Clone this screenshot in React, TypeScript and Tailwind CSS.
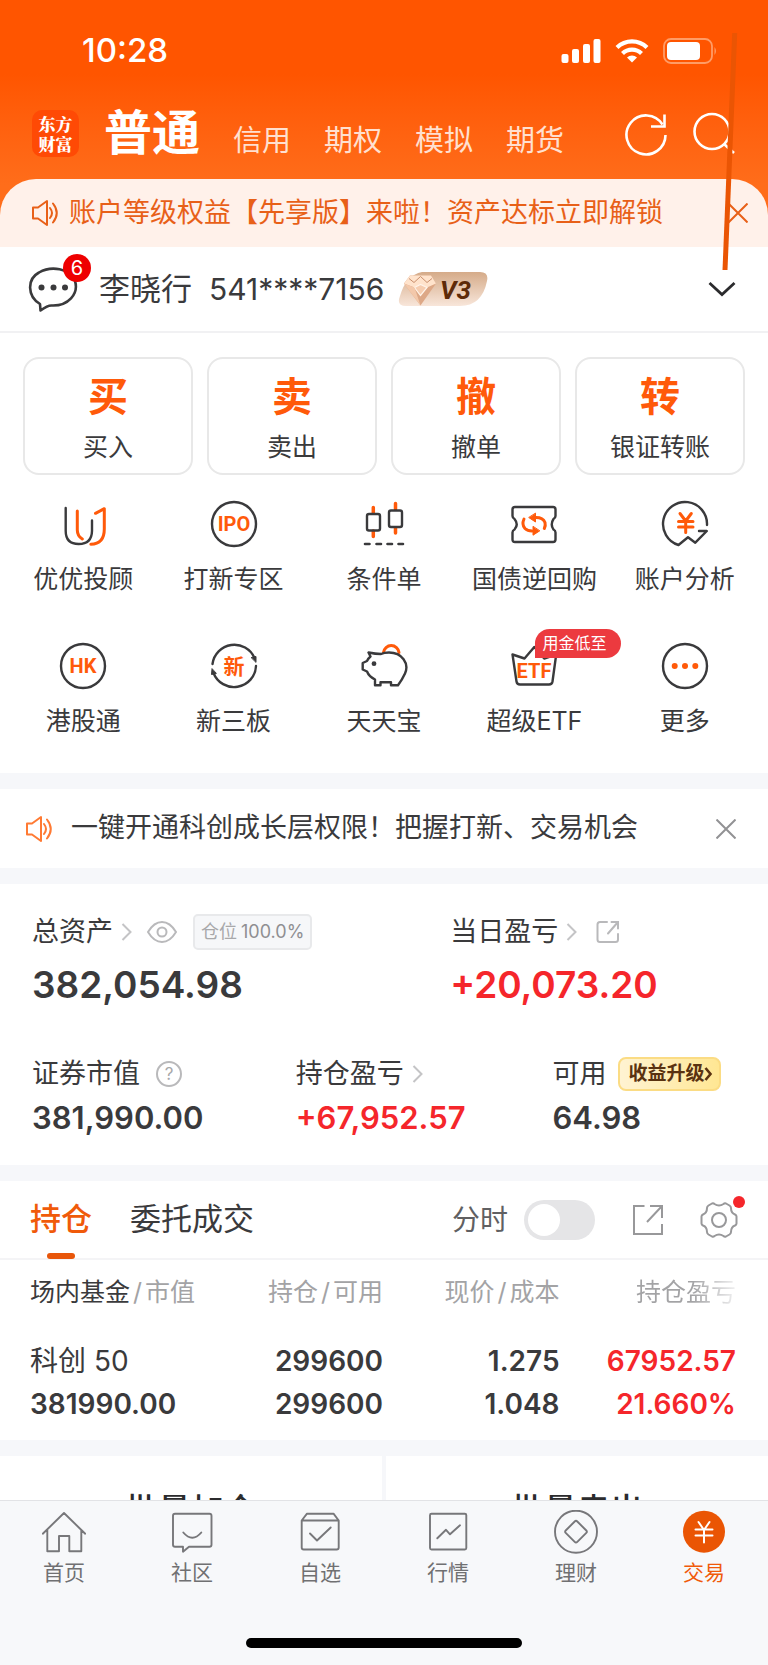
import type { ReactNode } from "react";

const dark = "#3a3a3c";
const orange = "#ff5a0a";

function Icon({ children }: { children: ReactNode }) {
  return (
    <svg
      viewBox="0 0 48 48"
      className="size-12"
      fill="none"
      stroke={dark}
      strokeWidth="2.4"
      strokeLinecap="round"
      strokeLinejoin="round"
      aria-hidden="true"
    >
      {children}
    </svg>
  );
}

function IconText({ children, size = 20 }: { children: string; size?: number }) {
  return (
    <text
      x="24"
      y={24 + size * 0.36}
      textAnchor="middle"
      fontSize={size}
      fill={orange}
      stroke="none"
      className="font-['Roboto','Noto_Sans_CJK_SC',sans-serif] font-bold"
    >
      {children}
    </text>
  );
}

function Horn({ className }: { className: string }) {
  return (
    <svg viewBox="0 0 28 28" className={`size-7 shrink-0 ${className}`} fill="none" stroke="currentColor" strokeWidth="2" aria-hidden="true">
      <path d="M2 8.500h5L16 2v24l-9-6.500H2z" strokeLinejoin="round" />
      <path d="M19 9q4 5 0 10M22 4.500q7.500 9.500 0 19" strokeLinecap="round" />
    </svg>
  );
}

function Close({ className }: { className: string }) {
  return (
    <svg viewBox="0 0 20 20" className={`size-5 ${className}`} stroke="currentColor" strokeWidth="2" aria-hidden="true">
      <path d="M0.500 0.500l19 19M19.500 0.500l-19 19" />
    </svg>
  );
}

function Chevron() {
  return (
    <svg viewBox="0 0 12 20" className="h-5 w-3 shrink-0 text-[#c4c4c6]" fill="none" stroke="currentColor" strokeWidth="2" aria-hidden="true">
      <path d="M1.500 2l8 8-8 8" />
    </svg>
  );
}

function StatusBar() {
  return (
    <div className="flex h-[102px] items-center justify-between pr-[50px] pl-[82px] text-white">
      <span className="text-[33px] font-medium">10:28</span>
      <div className="flex items-center gap-[14px]">
        <svg viewBox="0 0 40 26" className="h-[26px] w-10" fill="currentColor" aria-hidden="true">
          <rect x="0.500" y="16" width="7" height="9" rx="2" />
          <rect x="11" y="11" width="7" height="14" rx="2" />
          <rect x="22" y="6" width="7" height="19" rx="2" />
          <rect x="32.500" y="1" width="7" height="24" rx="2" />
        </svg>
        <svg viewBox="0 0 34 26" className="h-[26px] w-[34px]" fill="none" stroke="currentColor" strokeWidth="4.200" aria-hidden="true">
          <path d="M2 9.500a21.500 21.500 0 0 1 30 0" />
          <path d="M7.500 15.500a13.500 13.500 0 0 1 19 0" />
          <path d="M17 24.500l-5-5a7.200 7.200 0 0 1 10 0z" fill="currentColor" stroke="none" />
        </svg>
        <svg viewBox="0 0 55 26" className="h-[26px] w-[55px]" aria-hidden="true">
          <rect x="1" y="1" width="48" height="24" rx="7" fill="none" stroke="#ff9c66" strokeWidth="1.800" />
          <rect x="4" y="4" width="33" height="18" rx="4" fill="#fff" />
          <path d="M51.500 9q3 4 0 8z" fill="#ff9c66" />
        </svg>
      </div>
    </div>
  );
}

function TitleBar() {
  return (
    <div className="flex h-[77px] items-start px-8 pt-[7px]">
      <div className="mt-px grid h-[47px] w-[47px] shrink-0 content-center rounded-[10px] bg-[#ff4a05] text-center font-['Noto_Serif_CJK_SC','Noto_Sans_CJK_SC',serif] text-[17px] leading-5 font-black text-white">
        东方
        <br />
        财富
      </div>
      <nav className="ml-[25px] flex flex-1 items-end gap-[33px] text-[29px] leading-8 text-[#ffe0d0]">
        <a href="#normal" className="text-[48px] leading-[48px] font-bold text-white">普通</a>
        <a href="#credit">信用</a>
        <a href="#option">期权</a>
        <a href="#mock">模拟</a>
        <a href="#futures">期货</a>
      </nav>
      <div className="mt-[3px] flex gap-6 text-white">
        <button type="button" aria-label="刷新">
          <svg viewBox="0 0 44 44" className="size-11" fill="none" stroke="currentColor" strokeWidth="2.600" aria-hidden="true">
            <path d="M41.500 23A19.500 19.500 0 1 1 38.500 12.500" />
            <path d="M40.500 2.500V14.500H27" />
          </svg>
        </button>
        <button type="button" aria-label="搜索">
          <svg viewBox="0 0 44 44" className="size-11" fill="none" stroke="currentColor" strokeWidth="2.600" aria-hidden="true">
            <circle cx="20" cy="19.500" r="17.500" />
            <path d="M32 32l10 9" />
          </svg>
        </button>
      </div>
    </div>
  );
}

function AccountRow() {
  return (
    <div className="flex h-[86px] items-center border-b-2 border-[#f1f1f3] pr-8 pl-7">
      <button type="button" aria-label="消息" className="relative">
        <svg viewBox="0 0 50 50" className="size-[50px]" fill="none" stroke={dark} strokeWidth="2.600" strokeLinejoin="round" aria-hidden="true">
          <path d="M12 40C-1 32-1 15 11 8.500C23 1.500 42 4 47 17C51 30 40 42 24 41.500Q20 41 12.500 46.500Z" />
          <g fill={dark} stroke="none">
            <circle cx="13.500" cy="23.500" r="3" />
            <circle cx="25.500" cy="23.500" r="3" />
            <circle cx="37" cy="23.500" r="3" />
          </g>
        </svg>
        <span className="absolute -top-[10px] left-[35px] size-7 rounded-full bg-[#ee0000] text-center text-[20px] leading-7 text-white">6</span>
      </button>
      <span className="ml-[21px] text-[31px] text-[#3a3a3c]">李晓行</span>
      <span className="ml-[17px] text-[30px] text-[#3a3a3c]">541****7156</span>
      <svg viewBox="0 0 90 36" className="ml-[14px] h-9 w-[90px]" aria-label="V3">
        <defs>
          <linearGradient id="vip" x1="0" y1="1" x2="0" y2="0">
            <stop offset="0" stopColor="#f8e6da" />
            <stop offset="1" stopColor="#d5ab89" />
          </linearGradient>
        </defs>
        <path d="M24 1H82Q91 1 89 10Q84 35 62 35H8Q-2 35 2 25Q8 4 24 1Z" fill="url(#vip)" />
        <path d="M12 4.500h21l5 8-15.500 22L6 12.500z" fill="#dda887" />
        <path d="M6 12.500l6-8h21l5 8-9 4-6.500-3-6 3z" fill="#ffe3cc" />
        <path d="M16.500 16.500l6-3 6.500 3-6.500 8z" fill="#f6cdb0" stroke="#fff4ea" strokeWidth="1.200" />
        <path d="M6 12.500l10.500 4 6 18z" fill="#f3c8aa" />
        <path d="M11 7.500l5 4 6.500-6 6.500 6 5-4" fill="none" stroke="#c98f6d" strokeWidth="1" />
        <text x="42" y="28" fontSize="26" fill="#5d2a08" className="font-['Roboto',sans-serif] font-bold italic">
          V3
        </text>
      </svg>
      <button type="button" aria-label="展开" className="ml-auto">
        <svg viewBox="0 0 28 18" className="h-[18px] w-7" fill="none" stroke="#2b2b2d" strokeWidth="2.800" aria-hidden="true">
          <path d="M1.500 3l12.500 11.500L26.500 3" />
        </svg>
      </button>
    </div>
  );
}

const trades = [
  ["买", "买入"],
  ["卖", "卖出"],
  ["撤", "撤单"],
  ["转", "银证转账"],
];

const yen = "M19 13.500l5.700 7.500 5.600-7.500M24.700 21v11.500M17.500 21.500h14.500M17.500 27h14.500";

const tools: { label: string; tag?: string; icon: ReactNode }[] = [
  {
    label: "优优投顾",
    icon: (
      <>
        <path d="M6.700 8v23q0 13 13 13t13.300-13V20.500" />
        <path d="M18.300 11v19q0 6 5 9M36.500 13.300l8.800-4.600V29q0 15-13.500 15.300" stroke={orange} strokeWidth="3" />
      </>
    ),
  },
  {
    label: "打新专区",
    icon: (
      <>
        <circle cx="24" cy="24" r="22" />
        <IconText>IPO</IconText>
      </>
    ),
  },
  {
    label: "条件单",
    icon: (
      <>
        <path d="M13.300 7.500V13M13.300 31v5.500M35.500 3.500V9M35.500 28v5" stroke={orange} strokeWidth="3.500" />
        <rect x="7" y="14" width="13" height="16.500" rx="2" />
        <rect x="29" y="10.500" width="13" height="16.500" rx="2" />
        <path d="M5 44h4.500M16.500 44h4.500M27.500 44h4.500M38.500 44h4.500" strokeWidth="2.600" />
      </>
    ),
  },
  {
    label: "国债逆回购",
    icon: (
      <>
        <path d="M5 7H43q2.500 0 2.500 2.500V16q0 2-2 3-3.500 5.500 0 10.500 2 1 2 3V39.500q0 2.500-2.500 2.500H5q-2.500 0-2.500-2.500V32.500q0-2 2-3 4.500-5 0-10.500-2-1-2-3V9.500Q2.500 7 5 7z" />
        <path d="M14 19q-2.500 5.500 1 9.500 2.500 2.500 7 2.500M26 17.500q7 0 9 5 .800 3-.700 6" stroke={orange} strokeWidth="3" />
        <path d="M25.500 13.500v8.500l-6.500-4.300zM23 26.700v8.500l6.500-4.200z" fill={orange} stroke={orange} strokeWidth="1" />
      </>
    ),
  },
  {
    label: "账户分析",
    icon: (
      <>
        <path d="M46 25A22 22 0 1 0 17.500 45L27 37.300l7.300 5.400L45.800 31H38" />
        <path d={yen} stroke={orange} strokeWidth="3" />
      </>
    ),
  },
  {
    label: "港股通",
    icon: (
      <>
        <circle cx="24" cy="24" r="22" />
        <IconText>HK</IconText>
      </>
    ),
  },
  {
    label: "新三板",
    icon: (
      <>
        <path d="M2.500 22A22 22 0 0 1 44.500 16M46 24A22 22 0 0 1 3.500 31" />
        <path d="M41.500 15.500l4.500-1v5.500zM6 31.500l-4.500 1 .500-5.500z" fill={dark} strokeWidth="1" />
        <IconText size={21}>新</IconText>
      </>
    ),
  },
  {
    label: "天天宝",
    icon: (
      <>
        <path d="M23.500 10.500a7.800 7.800 0 0 1 15.500 0" stroke={orange} strokeWidth="3" />
        <path d="M8.500 10.500q7 1.500 12.500 1.500 3-1.500 8-1.500c13 0 20.500 11 16 21Q42.500 37 38 43.300H31V40.300H20.500v3H15V37.500Q9 34.500 7 29.500L2.700 27.500V21L7 19q1.500-3 3.500-4.500Z" />
        <circle cx="14" cy="21.700" r="2.400" fill={dark} stroke="none" />
      </>
    ),
  },
  {
    label: "超级ETF",
    tag: "用金低至",
    icon: (
      <>
        <path d="M2.500 12.500l4 27q.500 3 3.500 3h29q3 0 3.500-3l3.700-27-12 4L24.300 5 14.500 16.500z" />
        <text x="24" y="36" textAnchor="middle" fontSize="20" fill={orange} stroke="none" className="font-['Roboto',sans-serif] font-bold">
          ETF
        </text>
      </>
    ),
  },
  {
    label: "更多",
    icon: (
      <>
        <circle cx="24" cy="24" r="22" />
        <g fill={orange} stroke="none">
          <circle cx="13.700" cy="24" r="3" />
          <circle cx="24" cy="24" r="3" />
          <circle cx="34.300" cy="24" r="3" />
        </g>
      </>
    ),
  },
];

function Actions() {
  return (
    <section className="pt-6 pb-[37px] text-[25px] leading-[30px] text-[#3a3a3c]">
      <div className="grid grid-cols-4 gap-[14px] px-[23px]">
        {trades.map(([mark, label]) => (
          <button type="button" key={mark} className="flex flex-col items-center gap-[11px] rounded-2xl border-2 border-[#e8e8e8] pt-[14px] pb-[11px]">
            <span className="text-[40px] leading-[48px] font-bold text-[#ff5a0a]">{mark}</span>
            <span>{label}</span>
          </button>
        ))}
      </div>
      <div className="mt-[25px] grid grid-cols-5 gap-y-12 px-2">
        {tools.map(({ label, tag, icon }) => (
          <button type="button" key={label} className="flex flex-col items-center gap-4 whitespace-nowrap">
            <span className="relative">
              <Icon>{icon}</Icon>
              {tag && (
                <span className="absolute -top-[13px] left-[25px] w-[86px] rounded-full rounded-bl-none bg-[#ec3a3f] pr-[15px] text-right text-[16px] leading-[29px] text-white">
                  {tag}
                </span>
              )}
            </span>
            <span>{label}</span>
          </button>
        ))}
      </div>
    </section>
  );
}

function Assets() {
  return (
    <section className="px-8 pt-[30px] pb-[27px] text-[27px] leading-9 text-[#3a3a3c]">
      <div className="grid grid-cols-[417fr_285fr]">
        <div>
          <div className="flex items-center">
            <span>总资产</span>
            <span className="ml-2"><Chevron /></span>
            <button type="button" aria-label="隐藏金额" className="ml-[14px]">
              <svg viewBox="0 0 30 24" className="h-6 w-[30px]" fill="none" stroke="#b9b9bb" strokeWidth="2" aria-hidden="true">
                <path d="M1 12Q7 2 15 2t14 10Q23 22 15 22T1 12z" />
                <circle cx="15" cy="12" r="4.500" />
              </svg>
            </button>
            <span className="ml-4 flex h-9 items-center gap-1 rounded-[5px] border-2 border-[#e8e9eb] bg-[#f6f7f9] px-[6px] text-[18px] whitespace-nowrap text-[#8f8f92]">
              <span className="text-[#a8a8aa]">仓位</span>100.0%
            </span>
          </div>
          <div className="mt-[11px] text-[37px] leading-[48px] font-semibold">382,054.98</div>
        </div>
        <div>
          <div className="flex items-center">
            <span>当日盈亏</span>
            <span className="ml-2"><Chevron /></span>
            <button type="button" aria-label="分享" className="ml-[18px]">
              <svg viewBox="0 0 24 24" className="size-6" fill="none" stroke="#b9b9bb" strokeWidth="2" strokeLinecap="round" aria-hidden="true">
                <path d="M11 2H4Q1.500 2 1.500 4.500v15Q1.500 22 4 22h15.500Q22 22 22 19.500V14M15.500 2H22v6.500M22 2L12 13.500" />
              </svg>
            </button>
          </div>
          <div className="mt-[11px] text-[37px] leading-[48px] font-semibold text-[#f5262b]">+20,073.20</div>
        </div>
      </div>
      <div className="mt-[47px] grid grid-cols-[263fr_256fr_183fr]">
        <div>
          <div className="flex items-center">
            <span>证券市值</span>
            <button type="button" aria-label="说明" className="ml-4 size-[26px] rounded-full border-2 border-[#b9b9bb] text-[17px] leading-[22px] text-[#a8a8aa]">?</button>
          </div>
          <div className="mt-[6px] text-[31px] leading-10 font-semibold">381,990.00</div>
        </div>
        <div>
          <div className="flex items-center">
            <span>持仓盈亏</span>
            <span className="ml-2"><Chevron /></span>
          </div>
          <div className="mt-[6px] text-[31px] leading-10 font-semibold text-[#f5262b]">+67,952.57</div>
        </div>
        <div>
          <div className="flex items-center">
            <span>可用</span>
            <a href="#upgrade" className="ml-3 flex h-[34px] items-center rounded-lg border-2 border-[#fbdc84] bg-linear-to-r from-[#fff3d2] to-[#ffe793] pr-[6px] pl-2 text-[19px] font-bold whitespace-nowrap text-[#5a3210]">
              收益升级
              <svg viewBox="0 0 9 16" className="h-4 w-[9px]" fill="none" stroke="currentColor" strokeWidth="2.600" aria-hidden="true">
                <path d="M1.500 2l5 6-5 6" />
              </svg>
            </a>
          </div>
          <div className="mt-[6px] text-[31px] leading-10 font-semibold">64.98</div>
        </div>
      </div>
    </section>
  );
}

function Slash() {
  return <span className="mx-[3px]">/</span>;
}

function Holdings() {
  return (
    <section>
      <div className="flex h-[79px] items-stretch border-b-2 border-[#f4f4f6] px-[30px]">
        <button type="button" className="relative text-[31px] font-medium text-[#f05a0a]">
          持仓
          <span className="absolute -bottom-px left-[17px] h-[6px] w-7 rounded-full bg-[#e8560a]" />
        </button>
        <button type="button" className="ml-[38px] text-[31px] text-[#3a3a3c]">委托成交</button>
        <label className="ml-auto flex items-center gap-4 text-[28px] text-[#606062]">
          分时
          <input
            type="checkbox"
            role="switch"
            className="h-10 w-[71px] appearance-none rounded-full bg-[#e5e5e7] before:m-1 before:block before:size-8 before:rounded-full before:bg-white"
          />
        </label>
        <button type="button" aria-label="分享" className="ml-[37px]">
          <svg viewBox="0 0 32 32" className="size-8" fill="none" stroke="#98989a" strokeWidth="2" aria-hidden="true">
            <path d="M12.500 2H2v28h28V20M18 2h12v12M30 2L15 18" />
          </svg>
        </button>
        <button type="button" aria-label="设置" className="relative ml-9">
          <svg viewBox="0 0 38 38" className="size-[38px]" fill="none" stroke="#98989a" strokeWidth="2" strokeLinejoin="round" aria-hidden="true">
            <path d="M12 2.500q1.500-.500 2.500.500 4.500 3 9 0 1-1 2.500-.500l3.500 2q1.500 1 1.500 2.500 0 5 4 6.500 1.500.700 1.500 2v7q0 1.300-1.500 2-4 1.500-4 6.500 0 1.500-1.500 2.500l-3.500 2q-1.500.500-2.500-.500-4.500-3-9 0-1 1-2.500.500l-3.500-2Q7 32.500 7 31q0-5-4-6.500-1.500-.700-1.500-2v-7q0-1.300 1.500-2Q7 12 7 7q0-1.500 1.500-2.500z" />
            <circle cx="19" cy="19" r="7" />
          </svg>
          <span className="absolute top-[15px] -right-[7px] size-3 rounded-full bg-[#f5262b]" />
        </button>
      </div>
      <div className="pr-8 pl-[30px]">
        <table className="w-full table-fixed text-right text-[28px] font-semibold whitespace-nowrap text-[#3a3a3c]">
          <thead className="text-[25px] leading-8 text-[#a3a3a5]">
            <tr>
              <th className="pt-4 text-left font-normal">
                <span className="text-[#3a3a3c]">场内基金</span>
                <Slash />
                市值
              </th>
              <th className="pt-4 font-normal">持仓<Slash />可用</th>
              <th className="pt-4 font-normal">现价<Slash />成本</th>
              <th className="bg-linear-to-r from-[#a3a3a5] from-75% to-[#f0f0f1] bg-clip-text pt-4 font-normal text-transparent">持仓盈亏</th>
            </tr>
          </thead>
          <tbody className="leading-[43px]">
            <tr>
              <td className="pt-8 pb-[14px] text-left">
                <div className="font-normal">科创 50</div>
                <div>381990.00</div>
              </td>
              <td className="pt-8 pb-[14px]">
                <div>299600</div>
                <div>299600</div>
              </td>
              <td className="pt-8 pb-[14px]">
                <div>1.275</div>
                <div>1.048</div>
              </td>
              <td className="pt-8 pb-[14px] text-[#f5262b]">
                <div>67952.57</div>
                <div>21.660%</div>
              </td>
            </tr>
          </tbody>
        </table>
      </div>
    </section>
  );
}

const tabs: { label: string; active?: boolean; icon: ReactNode }[] = [
  { label: "首页", icon: <path d="M.800 23.700L22 3l21.200 20.700M5.300 20v21.300h11.700V26h10.300v15.300h12V20" /> },
  {
    label: "社区",
    icon: (
      <>
        <path d="M5 3.700h34.500q2 0 2 2v29q0 2-2 2H19l-6 5v-5H5q-2 0-2-2v-29q0-2 2-2z" />
        <path d="M13.300 22.500q9 10.500 18 0" />
      </>
    ),
  },
  {
    label: "自选",
    icon: (
      <>
        <path d="M3.700 10.500L9 3.700h26.500l5.200 6.800v27q0 2-2 2H5.700q-2 0-2-2zH40.700" />
        <path d="M12 23.500l7 7 13.700-13" />
      </>
    ),
  },
  {
    label: "行情",
    icon: (
      <>
        <rect x="4" y="3.700" width="36.300" height="35.800" rx="1.500" />
        <path d="M11.300 28.300l8.700-8.500 4 4.500 10-9" />
      </>
    ),
  },
  {
    label: "理财",
    icon: (
      <>
        <circle cx="22" cy="21.700" r="21" />
        <path d="M20.700 11.500q1.300-1.300 2.600 0l9 9q1.200 1.200 0 2.400l-9 9q-1.300 1.300-2.600 0l-9-9q-1.200-1.200 0-2.400z" />
      </>
    ),
  },
  {
    label: "交易",
    active: true,
    icon: (
      <>
        <circle cx="22" cy="21.700" r="21" fill="#ea5504" stroke="none" />
        <path d="M16.500 12l5.500 8 5.500-8M22 20v12.500M13.500 19.500h17M13.500 25.500h17" stroke="#fff" strokeWidth="2" />
      </>
    ),
  },
];

function TabBar() {
  return (
    <footer className="border-t border-[#e2e3e6] bg-[#f7f8fa] pt-[9px] pb-[17px]">
      <nav className="grid grid-cols-6 text-[21px] leading-7 text-[#707072]">
        {tabs.map(({ label, active, icon }) => (
          <a key={label} href={`#${label}`} className={`flex flex-col items-center gap-[5px] ${active ? "text-[#f05a0a]" : ""}`}>
            <svg viewBox="0 0 44 44" className="size-11" fill="none" stroke="#77777a" strokeWidth="1.900" strokeLinejoin="round" strokeLinecap="round" aria-hidden="true">
              {icon}
            </svg>
            {label}
          </a>
        ))}
      </nav>
      <div className="mx-auto mt-[51px] h-[10px] w-[36%] rounded-full bg-black" />
    </footer>
  );
}

export default function App() {
  return (
    <div className="relative bg-[#f6f7fa] font-['Inter','Noto_Sans_CJK_SC',sans-serif]">
      <header className="bg-linear-to-b from-[#ff5500] from-30% to-[#ff6d1a] to-75%">
        <StatusBar />
        <TitleBar />
        <div className="flex h-[68px] items-center rounded-t-[36px] bg-[#fff1ea] pr-5 pl-[31px] text-[27px] text-[#e86018]">
          <Horn className="text-[#e86018]" />
          <span className="ml-[10px] whitespace-nowrap">账户等级权益【先享版】来啦！资产达标立即解锁</span>
          <button type="button" aria-label="关闭" className="ml-auto">
            <Close className="text-[#e86018]" />
          </button>
        </div>
      </header>

      <main className="space-y-4">
        <div className="bg-white">
          <AccountRow />
          <Actions />
        </div>
        <div className="flex h-[79px] items-center bg-white pr-8 pl-[25px] text-[27px] text-[#3a3a3c]">
          <Horn className="text-[#ff7a33]" />
          <span className="ml-[18px] whitespace-nowrap">一键开通科创成长层权限！把握打新、交易机会</span>
          <button type="button" aria-label="关闭" className="ml-auto">
            <Close className="text-[#929294]" />
          </button>
        </div>
        <div className="bg-white">
          <Assets />
        </div>
        <div className="bg-white">
          <Holdings />
        </div>
        <div className="grid h-11 grid-cols-2 gap-1 overflow-hidden text-[33px] leading-10 font-medium text-[#2b2b2d]">
          <button type="button" className="bg-white pt-[34px]">批量加仓</button>
          <button type="button" className="bg-white pt-[34px]">批量卖出</button>
        </div>
      </main>

      <TabBar />

      {/* stray marker stroke across the top right corner */}
      <svg viewBox="0 0 20 240" className="pointer-events-none absolute top-8 right-7 h-60 w-5" aria-hidden="true">
        <path d="M14.700 1L5 238" stroke="#ea5504" strokeWidth="5" />
      </svg>
    </div>
  );
}
